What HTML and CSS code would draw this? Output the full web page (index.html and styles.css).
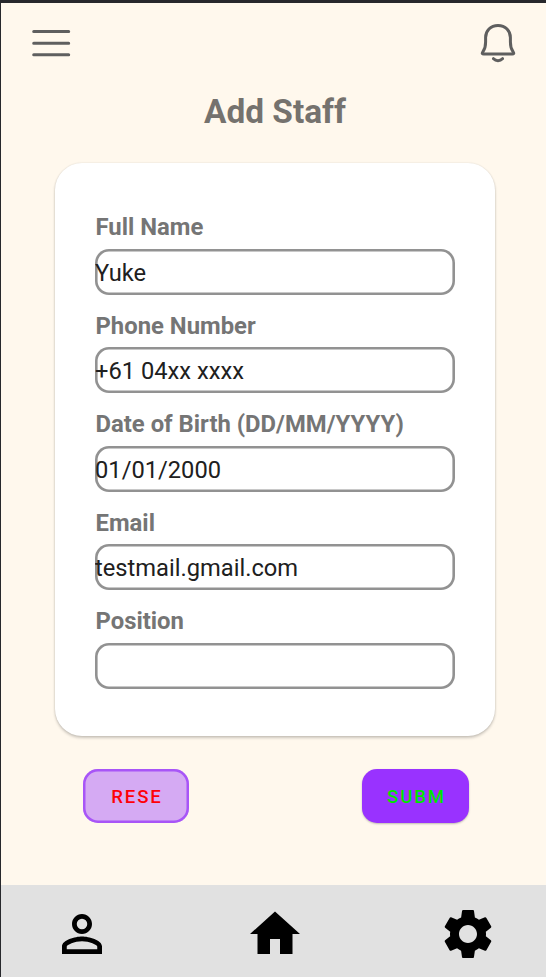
FILE: index.html
```html
<!DOCTYPE html>
<html lang="en">
<head>
<meta charset="utf-8">
<title>Add Staff</title>
<link rel="stylesheet" href="styles.css">
</head>
<body>
<div class="screen">
  <header class="topbar">
    <svg class="menu" viewBox="0 0 40 30" fill="none" stroke="#5f5f5f" stroke-width="3" stroke-linecap="round"><path d="M2.700 3.500h35M2.700 15.200h35M2.700 26.700h35"/></svg>
    <svg class="bell" viewBox="0 0 38 42" fill="none" stroke="#5f5f5f" stroke-width="3" stroke-linecap="round" stroke-linejoin="round"><path d="M19 3.500C11.500 3.500 6.600 9 6.600 15.500V20C6.600 26 5.700 27 4 29.500C2.600 31.600 3.300 31.900 4.800 31.900H33.200C34.700 31.900 35.400 31.600 34 29.500C32.300 27 31.400 26 31.400 20V15.500C31.400 9 26.500 3.500 19 3.500ZM14.500 36.700C17 39.300 21 39.300 23.500 36.700"/></svg>
  </header>
  <h1 class="title">Add Staff</h1>
  <form class="card">
    <label class="field"><span class="label">Full Name</span><input class="input" value="Yuke"></label>
    <label class="field"><span class="label">Phone Number</span><input class="input" value="+61 04xx xxxx"></label>
    <label class="field"><span class="label">Date of Birth (DD/MM/YYYY)</span><input class="input" value="01/01/2000"></label>
    <label class="field"><span class="label">Email</span><input class="input" value="testmail.gmail.com"></label>
    <label class="field"><span class="label">Position</span><input class="input" value=""></label>
  </form>
  <div class="actions">
    <button class="btn reset" type="button">RESE</button>
    <button class="btn submit" type="button">SUBM</button>
  </div>
  <nav class="tabs">
    <svg class="tab" viewBox="0 0 24 24"><path d="M12 5.900a2.100 2.100 0 1 1 0 4.200 2.100 2.100 0 0 1 0-4.200m0 9c2.970 0 6.100 1.460 6.100 2.100v1.100H5.900V17c0-.64 3.130-2.100 6.100-2.100M12 4C9.790 4 8 5.790 8 8s1.790 4 4 4 4-1.790 4-4-1.790-4-4-4zm0 9c-2.670 0-8 1.340-8 4v3h16v-3c0-2.660-5.330-4-8-4z"/></svg>
    <svg class="tab" viewBox="0 0 24 24"><path d="M10 20v-6h4v6h5v-8h3L12 3 2 12h3v8z"/></svg>
    <svg class="tab" viewBox="0 0 24 24"><path d="M19.140 12.940c.04-.3.060-.61.060-.94 0-.32-.02-.64-.07-.94l2.030-1.580c.18-.14.230-.41.120-.61l-1.920-3.320c-.12-.22-.37-.29-.59-.22l-2.390.96c-.5-.38-1.030-.7-1.620-.94l-.36-2.540c-.04-.24-.24-.41-.48-.41h-3.840c-.24 0-.43.170-.47.410l-.36 2.540c-.59.240-1.130.57-1.620.94l-2.390-.96c-.22-.08-.47 0-.59.220L2.740 8.870c-.12.210-.08.470.120.610l2.030 1.580c-.05.300-.09.630-.09.940s.02.640.07.940l-2.030 1.580c-.18.140-.23.410-.12.610l1.920 3.320c.12.220.37.290.59.220l2.390-.96c.5.380 1.030.7 1.620.94l.36 2.540c.05.240.24.410.48.410h3.840c.24 0 .44-.17.470-.41l.36-2.540c.59-.24 1.130-.56 1.620-.94l2.390.96c.22.080.47 0 .59-.22l1.920-3.320c.12-.22.070-.47-.12-.61l-2.010-1.580zM12 15.600c-1.980 0-3.600-1.620-3.600-3.600s1.620-3.600 3.600-3.600 3.600 1.620 3.600 3.600-1.620 3.600-3.600 3.600z"/></svg>
  </nav>
</div>
</body>
</html>
```
FILE: styles.css
```css
* { box-sizing: border-box; }
body { margin: 0; font-family: Roboto, "Liberation Sans", sans-serif; }
.screen {
  display: flex;
  flex-direction: column;
  height: 977px;
  border-top: 3px solid #27282c;
  border-left: 1px solid #27282c;
  background: #fff8ed;
  overflow: hidden;
}
.topbar {
  display: flex;
  justify-content: space-between;
  align-items: flex-start;
  height: 77px;
  padding: 19px 29px 0 30px;
}
.menu { width: 40px; height: 30px; margin-top: 6px; }
.bell { width: 38px; height: 42px; }
.title {
  margin: 0;
  height: 83px;
  padding-left: 3px;
  font-size: 33.400px;
  line-height: 64px;
  font-weight: 700;
  text-align: center;
  color: #75726e;
}
.card {
  display: flex;
  flex-direction: column;
  gap: 16px;
  width: 440px;
  height: 573px;
  margin: 0 0 0 54px;
  padding: 49px 40px 0;
  border-radius: 27px;
  background: #fff;
  box-shadow: 0 2px 3px rgba(0, 0, 0, .2), 0 0 2px rgba(0, 0, 0, .12);
}
.field { display: flex; flex-direction: column; }
.label {
  height: 36.500px;
  padding-left: .5px;
  font-size: 23.850px;
  line-height: 30px;
  font-weight: 700;
  color: #757575;
}
.input {
  width: 360px;
  height: 46px;
  padding: 2px 0 0;
  border: 0;
  border-radius: 14px;
  background: #fff;
  box-shadow: inset 0 0 0 2.600px #929292;
  font: 23.700px Roboto, "Liberation Sans", sans-serif;
  color: #202020;
}
.actions {
  display: flex;
  justify-content: space-between;
  padding: 33px 77px 0 82px;
}
.btn {
  width: 107px;
  height: 54px;
  padding: 1px 0 0 2px;
  border: 0;
  border-radius: 15px;
  font: 500 18.600px Roboto, "Liberation Sans", sans-serif;
  letter-spacing: 1.850px;
}
.reset { width: 106px; background: #d5aaf3; color: #ff0008; box-shadow: inset 0 0 0 2.500px #a855f7; }
.submit { background: #9932ff; color: #00e500; box-shadow: 0 1px 2px rgba(0, 0, 0, .25); }
.tabs {
  display: flex;
  justify-content: space-between;
  align-items: center;
  height: 92.500px;
  margin-top: auto;
  padding: 6px 48px 0 50.500px;
  background: #e1e1e1;
}
.tab { width: 60px; height: 60px; }
```
